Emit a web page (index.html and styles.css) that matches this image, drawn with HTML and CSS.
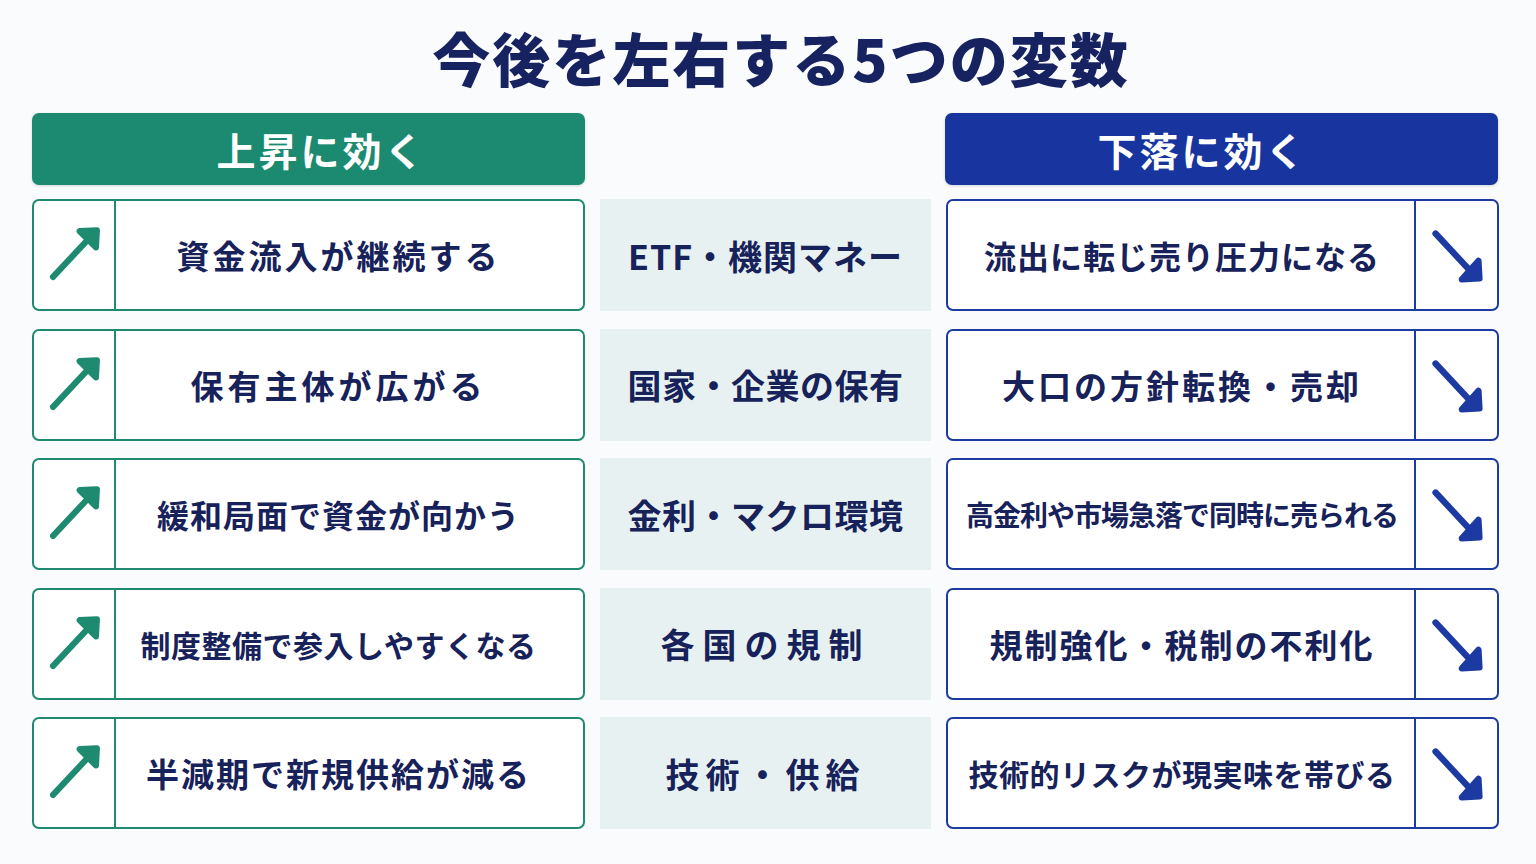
FILE: index.html
```html
<!DOCTYPE html>
<html lang="ja">
<head>
<meta charset="utf-8">
<title>今後を左右する5つの変数</title>
<link rel="stylesheet" href="styles.css">
</head>
<body>
<main class="board">
  <h1 class="title">今後を左右する5つの変数</h1>
  <div class="heads">
    <div class="head head--up"><span class="head-text head-text--up">上昇に効く</span></div>
    <div class="head-gap"></div>
    <div class="head head--down"><span class="head-text head-text--down">下落に効く</span></div>
  </div>
  <div class="rows">
    <div class="card card--up">
      <div class="icon icon--up"><svg width="84" height="108" viewBox="0 0 84 108"><path d="M20 77 L63 31" /><path class="head-fill" d="M48 29 L66 28 L65 46 Z" /></svg></div>
      <div class="label label--left fit-wide">資金流入が継続する</div>
    </div>
    <div class="mid fit-m1">ETF・機関マネー</div>
    <div class="card card--down">
      <div class="label label--right fit-normal">流出に転じ売り圧力になる</div>
      <div class="icon icon--down"><svg width="83" height="108" viewBox="0 0 83 108"><path d="M20 32 L61 76" /><path class="head-fill" d="M64 60 L65 78 L47 79 Z" /></svg></div>
    </div>

    <div class="card card--up">
      <div class="icon icon--up"><svg width="84" height="108" viewBox="0 0 84 108"><path d="M20 77 L63 31" /><path class="head-fill" d="M48 29 L66 28 L65 46 Z" /></svg></div>
      <div class="label label--left fit-wider">保有主体が広がる</div>
    </div>
    <div class="mid fit-m2">国家・企業の保有</div>
    <div class="card card--down">
      <div class="label label--right fit-wide">大口の方針転換・売却</div>
      <div class="icon icon--down"><svg width="83" height="108" viewBox="0 0 83 108"><path d="M20 32 L61 76" /><path class="head-fill" d="M64 60 L65 78 L47 79 Z" /></svg></div>
    </div>

    <div class="card card--up">
      <div class="icon icon--up"><svg width="84" height="108" viewBox="0 0 84 108"><path d="M20 77 L63 31" /><path class="head-fill" d="M48 29 L66 28 L65 46 Z" /></svg></div>
      <div class="label label--left fit-normal">緩和局面で資金が向かう</div>
    </div>
    <div class="mid fit-m2">金利・マクロ環境</div>
    <div class="card card--down">
      <div class="label label--right fit-tighter">高金利や市場急落で同時に売られる</div>
      <div class="icon icon--down"><svg width="83" height="108" viewBox="0 0 83 108"><path d="M20 32 L61 76" /><path class="head-fill" d="M64 60 L65 78 L47 79 Z" /></svg></div>
    </div>

    <div class="card card--up">
      <div class="icon icon--up"><svg width="84" height="108" viewBox="0 0 84 108"><path d="M20 77 L63 31" /><path class="head-fill" d="M48 29 L66 28 L65 46 Z" /></svg></div>
      <div class="label label--left fit-tight">制度整備で参入しやすくなる</div>
    </div>
    <div class="mid fit-spaced">各国の規制</div>
    <div class="card card--down">
      <div class="label label--right fit-mid">規制強化・税制の不利化</div>
      <div class="icon icon--down"><svg width="83" height="108" viewBox="0 0 83 108"><path d="M20 32 L61 76" /><path class="head-fill" d="M64 60 L65 78 L47 79 Z" /></svg></div>
    </div>

    <div class="card card--up">
      <div class="icon icon--up"><svg width="84" height="108" viewBox="0 0 84 108"><path d="M20 77 L63 31" /><path class="head-fill" d="M48 29 L66 28 L65 46 Z" /></svg></div>
      <div class="label label--left fit-mid">半減期で新規供給が減る</div>
    </div>
    <div class="mid fit-spaced2">技術・供給</div>
    <div class="card card--down">
      <div class="label label--right fit-tight">技術的リスクが現実味を帯びる</div>
      <div class="icon icon--down"><svg width="83" height="108" viewBox="0 0 83 108"><path d="M20 32 L61 76" /><path class="head-fill" d="M64 60 L65 78 L47 79 Z" /></svg></div>
    </div>
  </div>
</main>
</body>
</html>
```

FILE: styles.css
```css
* { box-sizing: border-box; }

html, body {
  margin: 0;
  padding: 0;
  background: #fafbfc;
}

body {
  width: 1536px;
  height: 864px;
  overflow: hidden;
  font-family: "Noto Sans CJK JP", "Noto Sans", sans-serif;
  color: #17215a;
}

.board {
  padding: 28px 0 0 32px;
  display: flex;
  flex-direction: column;
  width: 1500px;
}

.title {
  margin: 0;
  height: 58px;
  font-size: 58px;
  line-height: 58px;
  font-weight: 900;
  letter-spacing: 2px;
  text-align: center;
  color: #172261;
  padding-left: 30px;
  white-space: nowrap;
}

.heads {
  margin-top: 27px;
  display: grid;
  grid-template-columns: 553px 330px 553px;
  column-gap: 15px;
  height: 72px;
}

.head {
  border-radius: 7px;
  display: flex;
  align-items: center;
  justify-content: center;
  box-shadow: 0 1px 3px rgba(20, 40, 60, 0.18);
}

.head--up { background: #1c8a70; }
.head--down { background: #18349f; }

.head-text {
  color: #ffffff;
  font-size: 39px;
  font-weight: 700;
  letter-spacing: 3px;
  line-height: 1;
}

.head-text--up { margin-left: 26px; }
.head-text--down { margin-right: 38px; }

.rows {
  margin-top: 14px;
  display: grid;
  grid-template-columns: 553px 331px 553px;
  grid-auto-rows: 112px;
  column-gap: 15px;
  row-gap: 17.5px;
}

.card {
  border: 2px solid;
  border-radius: 7px;
  background: #ffffff;
  display: flex;
  align-items: stretch;
}

.card--up { border-color: #1f8a6f; }
.card--down { border-color: #1d3aa0; }

.icon {
  flex: 0 0 auto;
  display: flex;
  align-items: center;
  justify-content: center;
}

.icon--up {
  width: 82px;
  border-right: 2px solid #1f8a6f;
}

.icon--down {
  width: 83px;
  border-left: 2px solid #1d3aa0;
}

.icon svg path {
  fill: none;
  stroke-width: 6.5;
  stroke-linecap: round;
  stroke-linejoin: round;
}

.icon--up svg path { stroke: #1e8a6f; }
.icon--down svg path { stroke: #1d3aa3; }
.icon--up svg .head-fill { fill: #1e8a6f; }
.icon--down svg .head-fill { fill: #1d3aa3; }

.label {
  flex: 1 1 auto;
  display: flex;
  align-items: center;
  justify-content: center;
  font-weight: 700;
  white-space: nowrap;
  color: #17215a;
}

.label--left { padding-right: 22px; }
.label--right { padding-left: 2px; }

.fit-wider { font-size: 33px; letter-spacing: 4px; }
.fit-wide { font-size: 33px; letter-spacing: 3px; }
.fit-mid { font-size: 33px; letter-spacing: 2px; }
.fit-normal { font-size: 32px; letter-spacing: 1px; }
.fit-tight { font-size: 30px; letter-spacing: 0.5px; }
.fit-tighter { font-size: 28px; letter-spacing: -1px; }

.mid {
  background: #e8f1f1;
  display: flex;
  align-items: center;
  justify-content: center;
  font-weight: 700;
  font-size: 34px;
  white-space: nowrap;
  color: #17215a;
}

.fit-m1 { letter-spacing: 1px; }
.fit-m2 { letter-spacing: 0.5px; }
.fit-spaced { letter-spacing: 8px; }
.fit-spaced2 { letter-spacing: 6px; }
```
